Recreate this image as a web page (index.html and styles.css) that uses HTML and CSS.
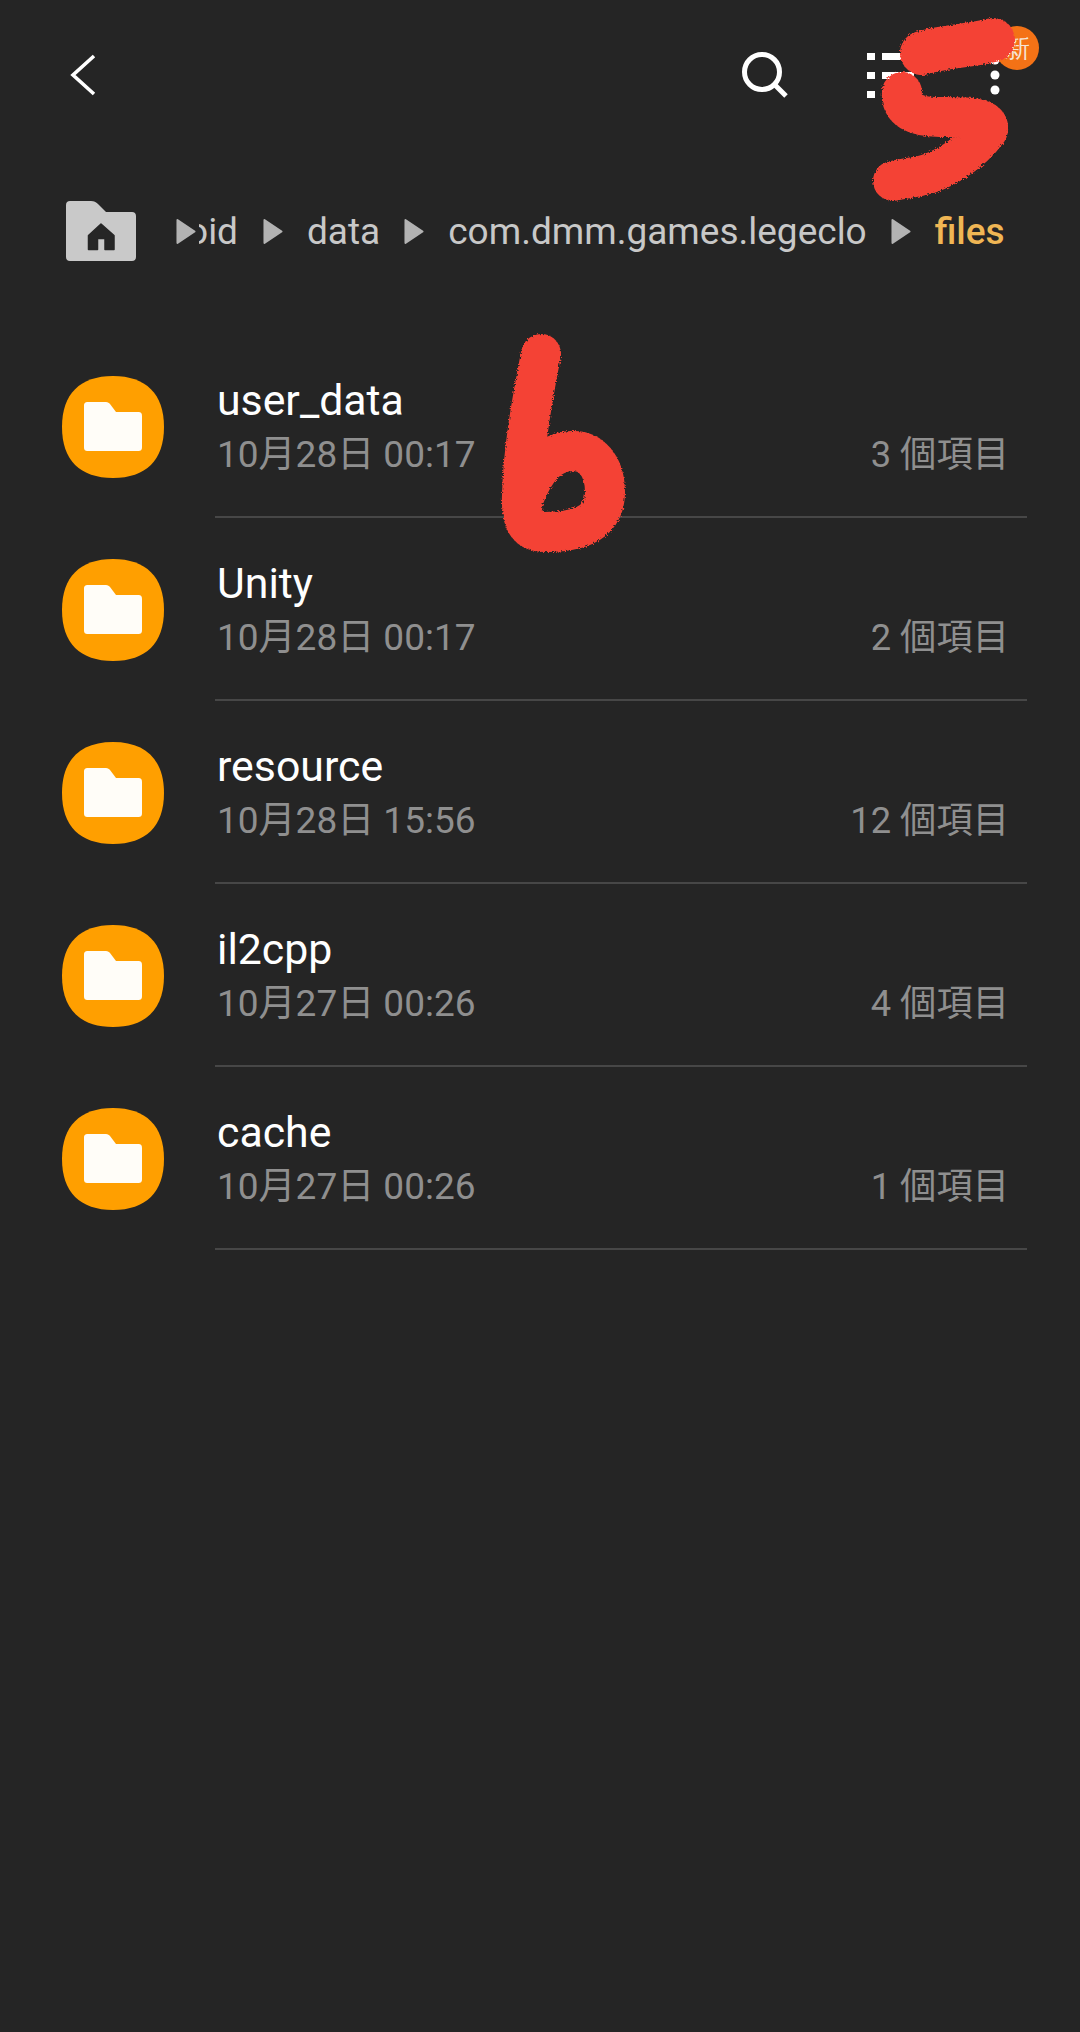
FILE: index.html
```html
<!DOCTYPE html>
<html lang="zh-Hant">
<head>
<meta charset="utf-8">
<title>files</title>
<link rel="stylesheet" href="styles.css">
</head>
<body>
<div class="page">
  <header class="topbar">
    <button class="icon-btn back" aria-label="back">
      <svg width="26" height="42" viewBox="0 0 26 42"><path d="M24 2 L3 21 L24 40" fill="none" stroke="#fff" stroke-width="3.6"/></svg>
    </button>
    <div class="spacer"></div>
    <button class="icon-btn search" aria-label="search">
      <svg width="48" height="48" viewBox="0 0 48 48"><circle cx="21" cy="21" r="17.5" fill="none" stroke="#fff" stroke-width="5"/><path d="M33.5 33.5 L45 45" fill="none" stroke="#fff" stroke-width="5"/></svg>
    </button>
    <button class="icon-btn list" aria-label="view">
      <svg width="47" height="46" viewBox="0 0 47 46"><path d="M0 1h8v7H0zM0 20h8v7H0zM0 39h8v7H0zM15 1h32v7H15zM15 20h32v7H15zM15 39h32v7H15z" fill="#fff"/></svg>
    </button>
    <button class="icon-btn more" aria-label="more">
      <svg width="10" height="40" viewBox="0 0 10 40"><circle cx="5" cy="5" r="4.5" fill="#fff"/><circle cx="5" cy="20" r="4.5" fill="#fff"/><circle cx="5" cy="35" r="4.5" fill="#fff"/></svg>
      <span class="badge">新</span>
    </button>
  </header>

  <nav class="crumbs">
    <svg class="home" width="70" height="60" viewBox="0 0 70 60"><path d="M4 0H25C28 0 30 1 32 3L40 11H66C68.500 11 70 12.500 70 15V56C70 58.500 68.500 60 66 60H4C1.500 60 0 58.500 0 56V4C0 1.500 1.500 0 4 0Z" fill="#c9c9c9"/><path d="M35 23 L48 34.500V48.500H39V37.500H31.500V48.500H22.500V34.500Z" fill="#262626" stroke="#262626" stroke-width="1.500" stroke-linejoin="round"/></svg>
    <svg class="tri first" width="20" height="27" viewBox="0 0 21 27"><path d="M1.500 1.500 L19.500 13.500 L1.500 25.500Z" fill="#b3b3b3" stroke="#b3b3b3" stroke-width="2" stroke-linejoin="round"/></svg>
    <span class="crumb clipped"><span>android</span></span>
    <svg class="tri" width="20" height="27" viewBox="0 0 21 27"><path d="M1.500 1.500 L19.500 13.500 L1.500 25.500Z" fill="#b3b3b3" stroke="#b3b3b3" stroke-width="2" stroke-linejoin="round"/></svg>
    <span class="crumb">data</span>
    <svg class="tri" width="20" height="27" viewBox="0 0 21 27"><path d="M1.500 1.500 L19.500 13.500 L1.500 25.500Z" fill="#b3b3b3" stroke="#b3b3b3" stroke-width="2" stroke-linejoin="round"/></svg>
    <span class="crumb">com.dmm.games.legeclo</span>
    <svg class="tri" width="20" height="27" viewBox="0 0 21 27"><path d="M1.500 1.500 L19.500 13.500 L1.500 25.500Z" fill="#b3b3b3" stroke="#b3b3b3" stroke-width="2" stroke-linejoin="round"/></svg>
    <span class="crumb current">files</span>
  </nav>

  <ul class="rows">
    <li class="row">
      <svg class="ficon" width="102" height="102" viewBox="0 0 102 102"><path d="M51 0C84 0 102 18 102 51C102 84 84 102 51 102C18 102 0 84 0 51C0 18 18 0 51 0Z" fill="#ff9f00"/><path d="M26 26H44C46 26 47 27 48 28L54 36H76C79 36 80 37 80 40V71C80 74 79 75 76 75H26C23 75 22 74 22 71V30C22 27 23 26 26 26Z" fill="#fffdf8"/></svg>
      <div class="row-body">
        <div class="name">user_data</div>
        <div class="meta"><span>10月28日 00:17</span><span class="count">3 個項目</span></div>
      </div>
    </li>
    <li class="row">
      <svg class="ficon" width="102" height="102" viewBox="0 0 102 102"><path d="M51 0C84 0 102 18 102 51C102 84 84 102 51 102C18 102 0 84 0 51C0 18 18 0 51 0Z" fill="#ff9f00"/><path d="M26 26H44C46 26 47 27 48 28L54 36H76C79 36 80 37 80 40V71C80 74 79 75 76 75H26C23 75 22 74 22 71V30C22 27 23 26 26 26Z" fill="#fffdf8"/></svg>
      <div class="row-body">
        <div class="name">Unity</div>
        <div class="meta"><span>10月28日 00:17</span><span class="count">2 個項目</span></div>
      </div>
    </li>
    <li class="row">
      <svg class="ficon" width="102" height="102" viewBox="0 0 102 102"><path d="M51 0C84 0 102 18 102 51C102 84 84 102 51 102C18 102 0 84 0 51C0 18 18 0 51 0Z" fill="#ff9f00"/><path d="M26 26H44C46 26 47 27 48 28L54 36H76C79 36 80 37 80 40V71C80 74 79 75 76 75H26C23 75 22 74 22 71V30C22 27 23 26 26 26Z" fill="#fffdf8"/></svg>
      <div class="row-body">
        <div class="name">resource</div>
        <div class="meta"><span>10月28日 15:56</span><span class="count">12 個項目</span></div>
      </div>
    </li>
    <li class="row">
      <svg class="ficon" width="102" height="102" viewBox="0 0 102 102"><path d="M51 0C84 0 102 18 102 51C102 84 84 102 51 102C18 102 0 84 0 51C0 18 18 0 51 0Z" fill="#ff9f00"/><path d="M26 26H44C46 26 47 27 48 28L54 36H76C79 36 80 37 80 40V71C80 74 79 75 76 75H26C23 75 22 74 22 71V30C22 27 23 26 26 26Z" fill="#fffdf8"/></svg>
      <div class="row-body">
        <div class="name">il2cpp</div>
        <div class="meta"><span>10月27日 00:26</span><span class="count">4 個項目</span></div>
      </div>
    </li>
    <li class="row">
      <svg class="ficon" width="102" height="102" viewBox="0 0 102 102"><path d="M51 0C84 0 102 18 102 51C102 84 84 102 51 102C18 102 0 84 0 51C0 18 18 0 51 0Z" fill="#ff9f00"/><path d="M26 26H44C46 26 47 27 48 28L54 36H76C79 36 80 37 80 40V71C80 74 79 75 76 75H26C23 75 22 74 22 71V30C22 27 23 26 26 26Z" fill="#fffdf8"/></svg>
      <div class="row-body">
        <div class="name">cache</div>
        <div class="meta"><span>10月27日 00:26</span><span class="count">1 個項目</span></div>
      </div>
    </li>
  </ul>

  <svg class="scribble" width="1080" height="2032" viewBox="0 0 1080 2032" aria-hidden="true">
    <defs>
      <filter id="rough" x="-10%" y="-10%" width="120%" height="120%">
        <feTurbulence type="fractalNoise" baseFrequency="0.6" numOctaves="2" seed="3" result="n"/>
        <feDisplacementMap in="SourceGraphic" in2="n" scale="4"/>
      </filter>
    </defs>
    <g filter="url(#rough)">
      <path class="stroke wide" d="M993 40 C970 46 945 46 922 53"/>
      <path class="stroke" d="M902 92 C900 110 915 117 940 117 C965 117 990 116 988 130 C970 155 940 172 920 176 C908 178 902 179 893 181"/>
      <path class="stroke" d="M541 354 C532 400 523 450 522 495 C521 520 526 532 545 532 C570 532 605 528 605 492 C605 465 590 450 572 451 C548 452 535 470 525 495"/>
    </g>
  </svg>
</div>
</body>
</html>
```
FILE: styles.css
```css
* { box-sizing: border-box; }
html, body { margin: 0; padding: 0; }
body {
  background: #252525;
  font-family: Roboto, "Noto Sans CJK TC", sans-serif;
  color: #fff;
}
.page {
  position: relative;
  width: 1080px;
  height: 2032px;
  overflow: hidden;
  background: #252525;
}
.topbar {
  display: flex;
  align-items: center;
  height: 149px;
  padding-left: 70px;
}
.spacer { flex: 1; }
.icon-btn {
  display: flex;
  position: relative;
  padding: 0;
  border: 0;
  background: none;
}
.search { margin-right: 78px; }
.list { margin-right: 76px; }
.more { margin-right: 80px; }
.badge {
  position: absolute;
  left: 5px;
  top: -29px;
  width: 44px;
  height: 44px;
  border-radius: 50%;
  background: #f47216;
  color: #f6e4d6;
  font-size: 25px;
  line-height: 44px;
  text-align: center;
}
.crumbs {
  display: flex;
  align-items: center;
  height: 164px;
  margin-bottom: 22px;
  padding-left: 66px;
  font-size: 37px;
  color: #c8c8c8;
  white-space: nowrap;
}
.home { margin-right: 40px; }
.tri { flex: none; }
.crumb { margin: 0 24px; }
.clipped {
  display: flex;
  justify-content: flex-end;
  width: 39px;
  margin: 0 25px 0 3px;
  overflow: hidden;
}
.current { color: #f0b654; font-weight: 500; }
.rows { list-style: none; margin: 0; padding: 0; }
.row {
  display: flex;
  align-items: center;
  height: 183px;
  padding-left: 62px;
}
.ficon { flex: none; margin-right: 51px; }
.row-body {
  width: 812px;
  height: 183px;
  padding: 37px 18px 0 2px;
  border-bottom: 2px solid #474747;
}
.name {
  font-size: 42.8px;
  line-height: 56px;
}
.meta {
  display: flex;
  justify-content: space-between;
  font-size: 37px;
  line-height: 54px;
  color: #8f8f8f;
}
.count { font-size: 36.3px; }
.scribble {
  position: absolute;
  left: 0;
  top: 0;
}
.stroke {
  fill: none;
  stroke: #f44336;
  stroke-width: 40;
  stroke-linecap: round;
  stroke-linejoin: round;
}
.wide { stroke-width: 44; }
```
